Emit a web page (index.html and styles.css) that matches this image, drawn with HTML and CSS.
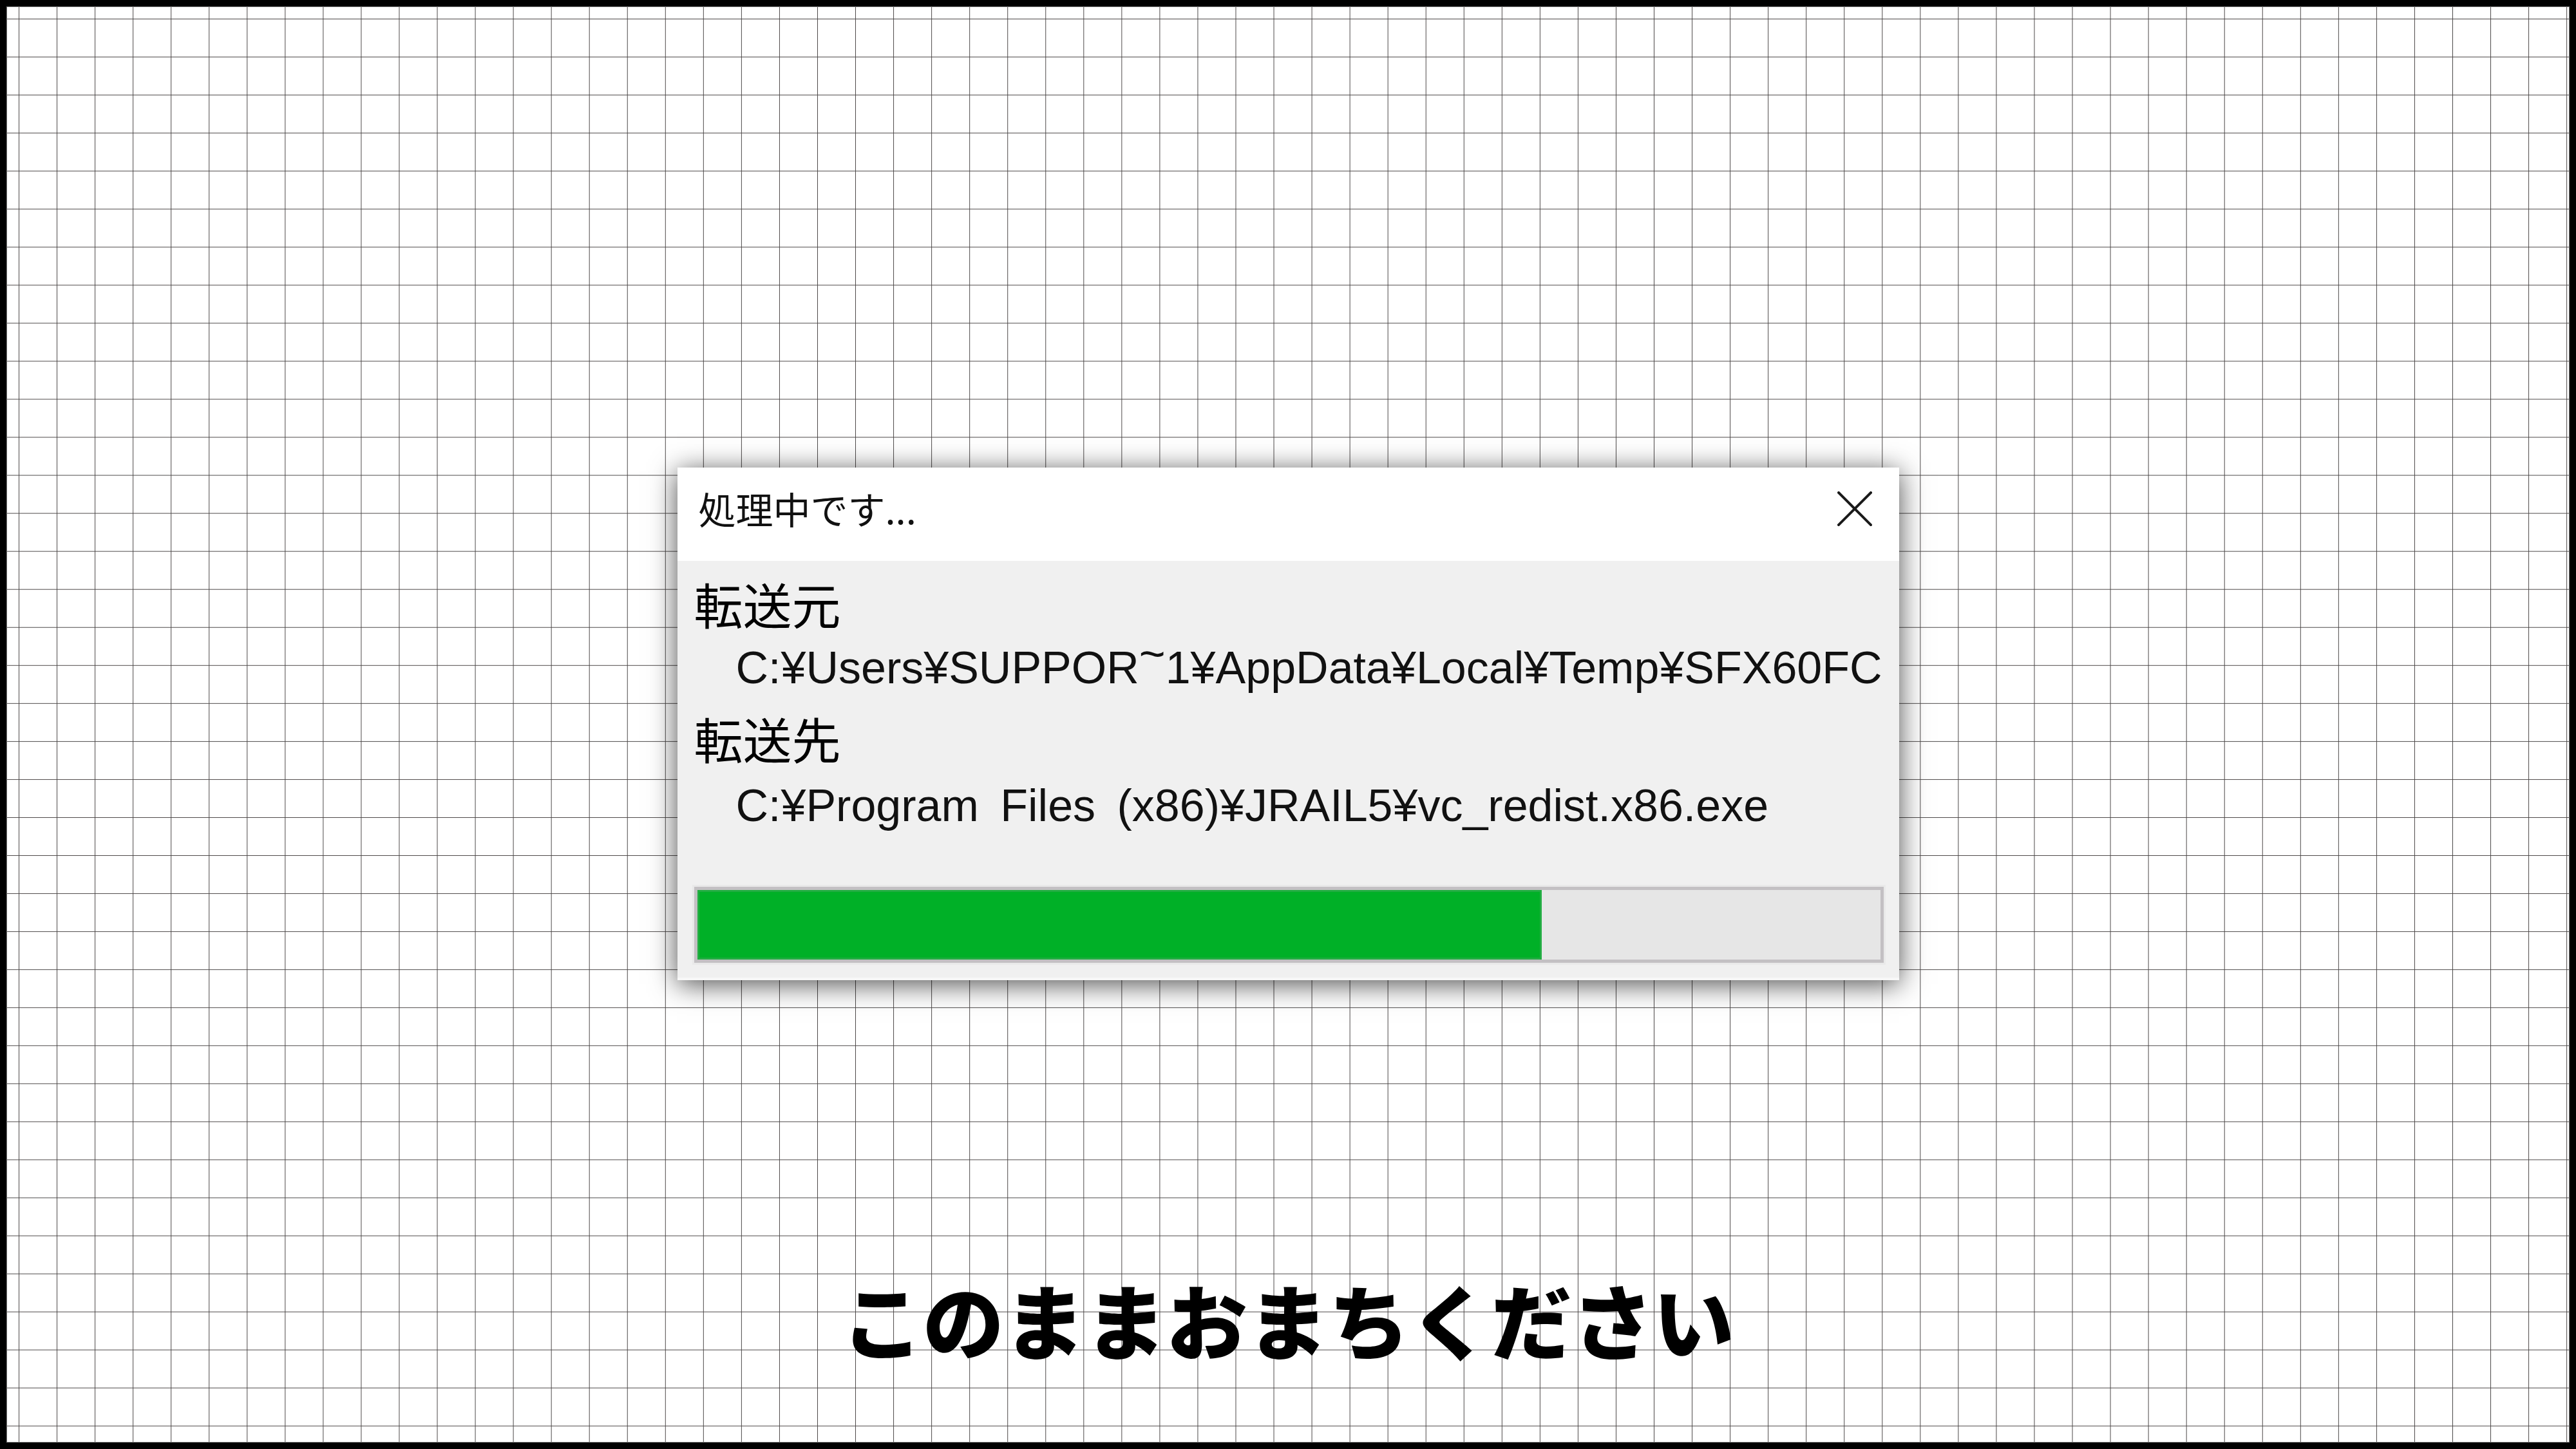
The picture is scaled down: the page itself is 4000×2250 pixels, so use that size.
FILE: index.html
```html
<!DOCTYPE html>
<html lang="ja">

<head>
    <meta charset="utf-8">
    <meta name="viewport" content="width=device-width, initial-scale=1.0">
    <title>処理中です...</title>
    <link rel="stylesheet" href="styles.css">
</head>

<body>

    <main class="screen">

        <section class="dialog">
            <header class="titlebar">
                <span class="title">処理中です...</span>
                <svg class="close" width="54" height="54" viewBox="0 0 54 54">
                    <line x1="2" y1="2" x2="52" y2="52" />
                    <line x1="52" y1="2" x2="2" y2="52" />
                </svg>
            </header>

            <div class="dialog-body">
                <div class="label label-src">転送元</div>
                <div class="path path-src">C:¥Users¥SUPPOR<span class="tilde">~</span>1¥AppData¥Local¥Temp¥SFX60FC</div>
                <div class="label label-dst">転送先</div>
                <div class="path path-dst">C:¥Program Files (x86)¥JRAIL5¥vc_redist.x86.exe</div>

                <div class="progress">
                    <div class="progress-fill" style="width: 71.4%"></div>
                </div>
            </div>
        </section>

        <p class="message">このままおまちください</p>

    </main>

</body>

</html>
```

FILE: styles.css
```css
body {
    margin: 0;
    background: #000;
}

.screen {
    width: 4000px;
    height: 2250px;
    box-sizing: border-box;
    border: 10px solid #000;
    background-color: #fff;
    background-image:
        linear-gradient(to right, #4b4747 1px, transparent 1px),
        linear-gradient(to bottom, #4b4747 1px, transparent 1px);
    background-size: 59.05px 59.05px;
    background-position: 19px 19px;
    box-shadow: inset 0 0 0 1px #7a7a7a;
    display: flex;
    flex-direction: column;
    align-items: center;
}

/* dialog window */

.dialog {
    width: 1897px;
    margin-top: 716px;
    background: #f0f0f0;
    border-bottom: 4px solid #f8f8f8;
    box-shadow: 0 6px 40px rgba(0, 0, 0, .7);
    overflow: hidden;
}

.titlebar {
    height: 145px;
    box-sizing: border-box;
    padding: 33px 42px 0 33px;
    background: #fff;
    display: flex;
    justify-content: space-between;
    align-items: flex-start;
}

.title {
    font-family: "Noto Sans CJK JP", sans-serif;
    font-size: 58px;
    line-height: 60px;
    color: #111;
}

.close {
    margin-top: 4px;
    stroke: #1a1a1a;
    stroke-width: 4;
    stroke-linecap: square;
}

.dialog-body {
    padding: 0 0 23px 26px;
}

.label {
    font-family: "Noto Sans CJK JP", sans-serif;
    font-size: 76px;
    line-height: 76px;
    color: #000;
}

.label-src {
    margin-top: 28px;
}

.label-dst {
    margin-top: 31px;
}

.path {
    font-family: "Liberation Sans", Arial, sans-serif;
    font-size: 70px;
    line-height: 80px;
    height: 80px;
    color: #111;
    padding-left: 65px;
    white-space: nowrap;
}

.path-src {
    margin-top: 22px;
}

.path-dst {
    margin-top: 27px;
    word-spacing: 14px;
}

.tilde {
    vertical-align: 0.32em;
    line-height: 0;
}

/* progress bar */

.progress {
    height: 118px;
    margin: 86px 24px 0 0;
    box-sizing: border-box;
    border: 5px solid #c3c0c3;
    background: #e6e6e6;
    box-shadow: 0 0 0 3px #e9e9e9;
}

.progress-fill {
    height: 100%;
    background: #00b027;
    box-shadow: inset 0 0 0 3px #22ad42;
}

/* caption under the dialog */

.message {
    margin: 462px 0 0;
    font-family: "Noto Sans CJK JP", sans-serif;
    font-weight: 900;
    font-size: 126px;
    line-height: 126px;
    color: #000;
}
```
